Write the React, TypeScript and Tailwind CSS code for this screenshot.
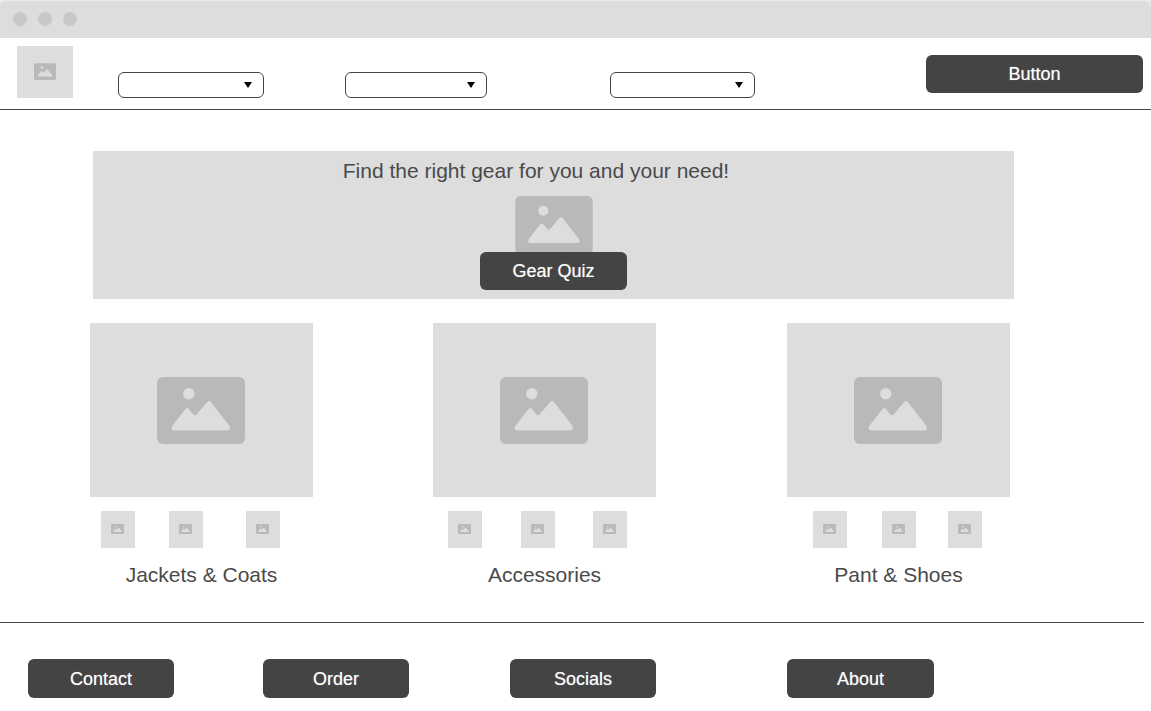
import React from "react";

function PictureIcon({ className }: { className: string }) {
  return (
    <svg viewBox="0 0 88 67" className={className} aria-hidden="true">
      <rect width="88" height="67" rx="6" fill="#b9b9b9" />
      <circle cx="31.8" cy="16.8" r="5.7" fill="#dddddd" />
      <path
        d="M17.5 53.5H70.5Q73 53.5 73 51Q73 49.8 72 48.3L54 25.3Q52 22.7 50 25.3L39.8 37.2Q38 39.4 36.2 37.2L32 32.2Q30.2 30 28.4 32.2L15.7 48.3Q14.6 49.8 14.6 51Q14.6 53.5 17.5 53.5Z"
        fill="#dddddd"
      />
    </svg>
  );
}

function Dropdown({ label, width }: { label: string; width: string }) {
  return (
    <div className={`relative mt-[34px] h-[26px] ${width}`}>
      <select
        aria-label={label}
        className="block h-full w-full appearance-none rounded-md border border-[#444444] bg-white px-2"
      />
      <svg
        viewBox="0 0 8 6"
        className="pointer-events-none absolute top-[10px] right-3 h-[6px] w-2"
        aria-hidden="true"
      >
        <path d="M0 0H8L4 6Z" fill="#000000" />
      </svg>
    </div>
  );
}

function DarkButton({ children, className }: { children: React.ReactNode; className: string }) {
  return (
    <button
      type="button"
      className={`rounded-md bg-[#444444] text-center text-lg leading-7 text-white [text-shadow:0_0_1px_#ffffff80] ${className}`}
    >
      {children}
    </button>
  );
}

const categories = [
  { name: "Jackets & Coats", thumbs: "grid-cols-[68px_77px_34px] pl-[11px]" },
  { name: "Accessories", thumbs: "grid-cols-[73px_72px_34px] pl-[15px]" },
  { name: "Pant & Shoes", thumbs: "grid-cols-[69px_66px_34px] pl-[26px]" },
];

export default function App() {
  return (
    <div className="bg-white font-['Liberation_Sans',Arial,sans-serif] text-[#4a4a4a]">
      <div className="bg-[#ebebeb] pt-px">
        <div className="flex h-[37px] items-center gap-[11px] rounded-t-md bg-[#dddddd] pb-[2px] pl-[13px]">
          <span className="size-[14px] rounded-full bg-[#c8c8c8]" />
          <span className="size-[14px] rounded-full bg-[#c8c8c8]" />
          <span className="size-[14px] rounded-full bg-[#c8c8c8]" />
        </div>
      </div>

      <header className="grid h-[72px] grid-cols-[101fr_227fr_265fr_316fr_217fr] border-b border-[#444444] pr-2 pl-[17px]">
        <div className="mt-2 flex h-[52px] w-14 items-center justify-center bg-[#dddddd] pb-px">
          <PictureIcon className="h-[17px] w-[22px]" />
        </div>
        <Dropdown label="First menu" width="w-[146px]" />
        <Dropdown label="Second menu" width="w-[142px]" />
        <Dropdown label="Third menu" width="w-[145px]" />
        <DarkButton className="mt-[17px] h-[38px] w-full">Button</DarkButton>
      </header>

      <main>
        <section className="mt-[41px] mr-[137px] ml-[93px] flex flex-col items-center bg-[#dddddd] pt-[6px] pb-[9px]">
          <h1 className="pr-[35px] text-[21px] leading-7">Find the right gear for you and your need!</h1>
          <PictureIcon className="mt-[11px] h-[59px] w-[78px]" />
          <DarkButton className="relative -mt-[3px] h-[38px] w-[147px]">Gear Quiz</DarkButton>
        </section>

        <section className="mt-6 mr-[141px] ml-[90px] grid grid-cols-[343fr_354fr_223fr]">
          {categories.map((category) => (
            <article key={category.name} className="w-[223px]">
              <div className="flex h-[174px] items-center justify-center bg-[#dddddd] pr-px">
                <PictureIcon className="h-[67px] w-[88px]" />
              </div>
              <div className={`mt-[14px] grid ${category.thumbs}`}>
                {[0, 1, 2].map((n) => (
                  <div key={n} className="flex h-[37px] w-[34px] items-center justify-center bg-[#dddddd] pr-px pb-px">
                    <PictureIcon className="h-[10px] w-[13px]" />
                  </div>
                ))}
              </div>
              <h2 className="mt-[13px] text-center text-[21px] leading-7">{category.name}</h2>
            </article>
          ))}
        </section>
      </main>

      <footer className="mt-[33px]">
        <hr className="mr-[7px] border-[#444444]" />
        <nav className="grid grid-cols-[235fr_247fr_277fr_364fr] pt-9 pb-[13px] pl-7">
          <DarkButton className="h-[39px] w-[146px]">Contact</DarkButton>
          <DarkButton className="h-[39px] w-[146px]">Order</DarkButton>
          <DarkButton className="h-[39px] w-[146px]">Socials</DarkButton>
          <DarkButton className="h-[39px] w-[147px]">About</DarkButton>
        </nav>
      </footer>
    </div>
  );
}
